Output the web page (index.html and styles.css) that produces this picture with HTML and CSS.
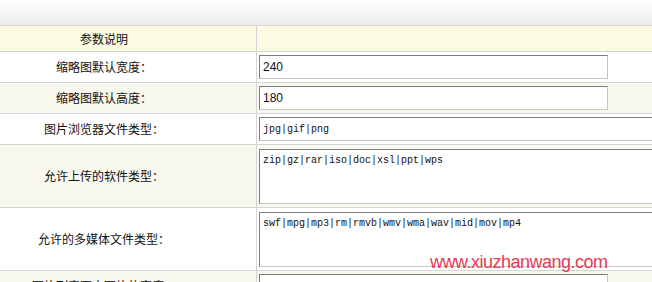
FILE: index.html
```
<!DOCTYPE html>
<html lang="zh-CN">

<head>
    <meta charset="UTF-8">
    <title>参数设置</title>
    <link rel="stylesheet" href="styles.css">
</head>

<body>
    <div class="topbar"></div>
    <div class="form">
        <div class="row row-head">
            <div class="label">参数说明</div>
            <div class="field"></div>
        </div>
        <div class="row">
            <div class="label">缩略图默认宽度：</div>
            <div class="field"><input class="txt" type="text" value="240"></div>
        </div>
        <div class="row row-alt">
            <div class="label">缩略图默认高度：</div>
            <div class="field"><input class="txt" type="text" value="180"></div>
        </div>
        <div class="row">
            <div class="label">图片浏览器文件类型：</div>
            <div class="field"><input class="txt txt-long mono" type="text" value="jpg|gif|png"></div>
        </div>
        <div class="row row-alt row-tall">
            <div class="label">允许上传的软件类型：</div>
            <div class="field"><textarea class="area mono">zip|gz|rar|iso|doc|xsl|ppt|wps</textarea></div>
        </div>
        <div class="row row-tall">
            <div class="label">允许的多媒体文件类型：</div>
            <div class="field"><textarea class="area mono">swf|mpg|mp3|rm|rmvb|wmv|wma|wav|mid|mov|mp4</textarea></div>
        </div>
        <div class="row row-alt">
            <div class="label">图片列表页中图片的宽度：</div>
            <div class="field"><input class="txt" type="text" value=""></div>
        </div>
    </div>
    <div class="watermark">www.xiuzhanwang.com</div>
</body>

</html>
```

FILE: styles.css
```
html,
body {
    margin: 0;
    padding: 0;
    overflow: hidden;
}
body {
    position: relative;
    background: #fff;
    font-family: "Noto Sans CJK SC", "Liberation Sans", sans-serif;
    font-size: 12px;
    color: #111;
}

.topbar {
    height: 25px;
    background: linear-gradient(#ffffff, #ebebeb);
    border-bottom: 1px solid #d6d6d6;
}

.form {
    width: 900px;
}
.row {
    display: flex;
    height: 30px;
    border-bottom: 1px solid #d5d5d5;
    background: #fff;
}
.row-head {
    height: 25px;
    background: #fbfbe3;
}
.row-alt {
    background: #f8f8ee;
}
.row-tall {
    height: 62px;
}

.label {
    width: 208px;
    padding-right: 48px;
    border-right: 1px solid #d5d5d5;
    display: flex;
    align-items: center;
    justify-content: center;
    line-height: 14px;
}
.field {
    flex: 1;
    padding: 3px 0 0 2px;
}
.row-tall .field {
    padding-top: 4px;
}

.txt,
.area {
    box-sizing: border-box;
    margin: 0;
    background: #fff;
    border: 1px solid;
    border-color: #7d7d7d #c6c6c6 #c6c6c6 #7d7d7d;
    font-family: "Liberation Sans", sans-serif;
    font-size: 12px;
    color: #111;
    outline: none;
}
.txt {
    width: 349px;
    height: 24px;
    padding: 0 3px;
}
.txt-long {
    width: 520px;
}
.area {
    display: block;
    width: 520px;
    height: 55px;
    padding: 5px 3px;
    resize: none;
    overflow: hidden;
}
.mono {
    font-family: "Liberation Mono", monospace;
    font-size: 10px;
}

.watermark {
    position: absolute;
    left: 430px;
    top: 252px;
    font-family: "Liberation Sans", sans-serif;
    font-size: 18px;
    letter-spacing: -0.5px;
    color: #e63a55;
}
```
